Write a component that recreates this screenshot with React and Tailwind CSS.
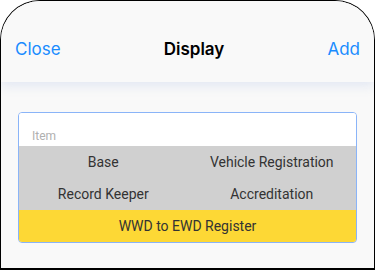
const items = ['Base', 'Vehicle Registration', 'Record Keeper', 'Accreditation'];

export default function App() {
  return (
    <div className="w-[375px] h-[270px] overflow-hidden rounded-t-[40px] border-x border-t border-b-2 border-black bg-[#f9f9f9]">
      <div className="relative h-[81px] bg-[#f9f9f9] shadow-[0_4px_10px_rgba(200,210,235,0.45)] flex items-center justify-between px-[14px] pt-[16px] font-['Inter',sans-serif] text-[17px]">
        <button className="text-[#1a8cff]">Close</button>
        <span className="font-semibold text-black">Display</span>
        <button className="text-[#1a8cff]">Add</button>
      </div>
      <div className="px-[17px] pt-[30px]">
        <div className="rounded-[4px] border border-[#8ab4f8] overflow-hidden font-['Roboto',sans-serif]">
          <div className="h-[33px] bg-white flex items-end pb-[1px] pl-[13px] text-[12px] text-[#b0b0b0]">
            Item
          </div>
          <div className="grid grid-cols-2 bg-[#d0d0d0] text-[14px] text-[#333]">
            {items.map((t) => (
              <div key={t} className="h-[32px] flex items-center justify-center">{t}</div>
            ))}
          </div>
          <div className="h-[32px] bg-[#fdd835] flex items-center justify-center text-[14px] text-[#333]">
            WWD to EWD Register
          </div>
        </div>
      </div>
    </div>
  );
}
